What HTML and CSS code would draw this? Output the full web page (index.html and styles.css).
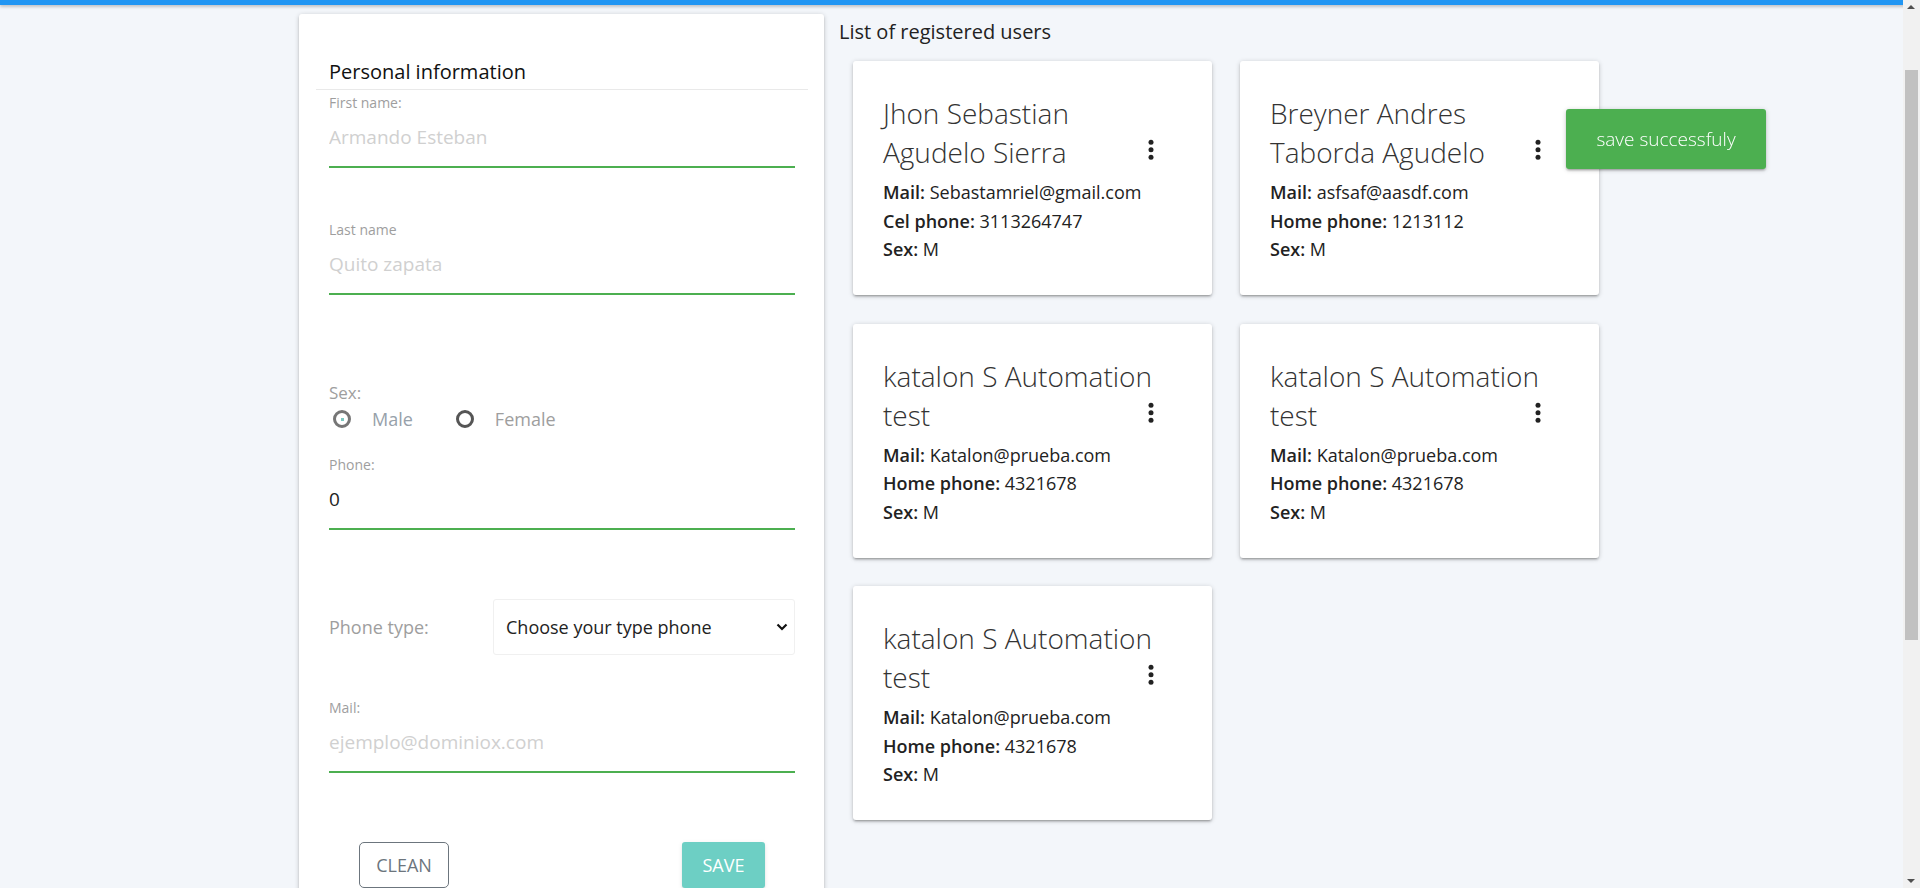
FILE: index.html
```html
<!DOCTYPE html>
<html lang="en">
<head>
<meta charset="utf-8">
<title>Users</title>
<link rel="stylesheet" href="styles.css">
</head>
<body>
<div class="topbar"></div>
<main class="page">
  <section class="form-card">
    <h2 class="form-title">Personal information</h2>
    <div class="divider"></div>
    <label class="field-label">First name:</label>
    <input class="field-input" type="text" placeholder="Armando Esteban">
    <label class="field-label gap-lg">Last name</label>
    <input class="field-input" type="text" placeholder="Quito zapata">
    <div class="sex-label">Sex:</div>
    <div class="radio-row">
      <span class="radio radio-male"><span class="radio-dot"></span></span>
      <span class="radio-text male">Male</span>
      <span class="radio radio-female"></span>
      <span class="radio-text">Female</span>
    </div>
    <label class="field-label phone-label">Phone:</label>
    <input class="field-input filled" type="text" value="0">
    <div class="type-row">
      <span class="type-label">Phone type:</span>
      <div class="select-wrap">
        <select class="type-select">
          <option>Choose your type phone</option>
        </select>
        <svg class="chevron" width="12" height="8" viewBox="0 0 12 8"><path d="M1.5 1.5 L6 6 L10.5 1.5" fill="none" stroke="#111" stroke-width="2.2"/></svg>
      </div>
    </div>
    <label class="field-label mail-label">Mail:</label>
    <input class="field-input" type="text" placeholder="ejemplo@dominiox.com">
    <div class="buttons">
      <button class="btn-clean">CLEAN</button>
      <button class="btn-save">SAVE</button>
    </div>
  </section>

  <section class="users">
    <h3 class="users-title">List of registered users</h3>
    <div class="grid">
      <article class="user-card">
        <div class="card-title"><span class="name"><span class="seg">Jhon Sebastian</span> <span class="seg">Agudelo Sierra</span></span><svg class="more" width="30" height="30" viewBox="0 0 24 24"><circle cx="12" cy="6.5" r="2"/><circle cx="12" cy="12.5" r="2"/><circle cx="12" cy="18.5" r="2"/></svg></div>
        <p class="line"><b>Mail:</b> Sebastamriel@gmail.com</p>
        <p class="line"><b>Cel phone:</b> 3113264747</p>
        <p class="line"><b>Sex:</b> M</p>
      </article>
      <article class="user-card">
        <div class="card-title"><span class="name"><span class="seg">Breyner Andres</span> <span class="seg">Taborda Agudelo</span></span><svg class="more" width="30" height="30" viewBox="0 0 24 24"><circle cx="12" cy="6.5" r="2"/><circle cx="12" cy="12.5" r="2"/><circle cx="12" cy="18.5" r="2"/></svg></div>
        <p class="line"><b>Mail:</b> asfsaf@aasdf.com</p>
        <p class="line"><b>Home phone:</b> 1213112</p>
        <p class="line"><b>Sex:</b> M</p>
      </article>
      <article class="user-card">
        <div class="card-title"><span class="name"><span class="seg">katalon S Automation</span> <span class="seg">test</span></span><svg class="more" width="30" height="30" viewBox="0 0 24 24"><circle cx="12" cy="6.5" r="2"/><circle cx="12" cy="12.5" r="2"/><circle cx="12" cy="18.5" r="2"/></svg></div>
        <p class="line"><b>Mail:</b> Katalon@prueba.com</p>
        <p class="line"><b>Home phone:</b> 4321678</p>
        <p class="line"><b>Sex:</b> M</p>
      </article>
      <article class="user-card">
        <div class="card-title"><span class="name"><span class="seg">katalon S Automation</span> <span class="seg">test</span></span><svg class="more" width="30" height="30" viewBox="0 0 24 24"><circle cx="12" cy="6.5" r="2"/><circle cx="12" cy="12.5" r="2"/><circle cx="12" cy="18.5" r="2"/></svg></div>
        <p class="line"><b>Mail:</b> Katalon@prueba.com</p>
        <p class="line"><b>Home phone:</b> 4321678</p>
        <p class="line"><b>Sex:</b> M</p>
      </article>
      <article class="user-card">
        <div class="card-title"><span class="name"><span class="seg">katalon S Automation</span> <span class="seg">test</span></span><svg class="more" width="30" height="30" viewBox="0 0 24 24"><circle cx="12" cy="6.5" r="2"/><circle cx="12" cy="12.5" r="2"/><circle cx="12" cy="18.5" r="2"/></svg></div>
        <p class="line"><b>Mail:</b> Katalon@prueba.com</p>
        <p class="line"><b>Home phone:</b> 4321678</p>
        <p class="line"><b>Sex:</b> M</p>
      </article>
    </div>
  </section>
</main>
<div class="toast">save successfuly</div>
<div class="scrollbar">
  <span class="sb-arrow sb-up"></span>
  <span class="sb-thumb"></span>
  <span class="sb-arrow sb-down"></span>
</div>
</body>
</html>
```
FILE: styles.css
```css
* { box-sizing: border-box; }
body {
  margin: 0;
  background: #f3f6fa;
  font-family: "Open Sans", "Noto Sans", sans-serif;
  color: #222;
}
.topbar {
  position: fixed;
  top: 0; left: 0; right: 0;
  height: 5px;
  background: #2196f3;
  box-shadow: 0 2px 3px rgba(0,0,0,0.2);
  z-index: 5;
}
.scrollbar {
  position: fixed;
  top: 0; right: 0; bottom: 0;
  width: 17px;
  background: #f1f1f1;
  z-index: 10;
}
.sb-thumb {
  position: absolute;
  left: 2px; right: 2px;
  top: 70px;
  height: 570px;
  background: #c1c1c1;
}
.sb-arrow {
  position: absolute;
  left: 4px;
  width: 0; height: 0;
  border-left: 4.5px solid transparent;
  border-right: 4.5px solid transparent;
}
.sb-up { top: 5px; border-bottom: 4px solid #505050; }
.sb-down { bottom: 5px; border-top: 4px solid #505050; }
.page {
  display: flex;
  align-items: flex-start;
  gap: 15px;
  padding: 14px 0 420px 299px;
}
.form-card {
  width: 525px;
  height: 960px;
  background: #fff;
  border-radius: 3px;
  box-shadow: 0 2px 2px 0 rgba(0,0,0,.14), 0 3px 1px -2px rgba(0,0,0,.12), 0 1px 5px 0 rgba(0,0,0,.2);
  padding: 44px 0 0 0;
  display: flex;
  flex-direction: column;
}
.form-title {
  margin: 0 0 3px 30px;
  font-size: 20px;
  font-weight: 400;
  line-height: 28px;
  color: #111;
}
.divider {
  height: 1px;
  background: #e9e9e9;
  margin: 0 16px 0 17px;
}
.field-label {
  display: block;
  margin: 5px 30px 0 30px;
  font-size: 14px;
  line-height: 16px;
  color: #9e9e9e;
}
.field-label.gap-lg { margin-top: 55px; }
.field-label.phone-label { margin-top: 26px; }
.field-label.mail-label { margin-top: 45px; }
.field-input {
  display: block;
  margin: 5px 29px 0 30px;
  width: 466px;
  height: 51px;
  padding: 0 0 8px 0;
  border: none;
  border-bottom: 1px solid #4caf50;
  box-shadow: 0 1px 0 0 #4caf50;
  outline: none;
  background: transparent;
  font-family: inherit;
  font-size: 19px;
  color: #222;
}
.field-input::placeholder { color: #d0d0d0; }
.sex-label {
  margin: 88px 0 0 30px;
  font-size: 17px;
  line-height: 22px;
  color: #9e9e9e;
}
.radio-row {
  display: flex;
  align-items: center;
  height: 24px;
  margin: 3px 0 0 34px;
}
.radio {
  width: 18px;
  height: 18px;
  border-radius: 50%;
  display: flex;
  align-items: center;
  justify-content: center;
}
.radio-male { border: 3px solid #767676; }
.radio-female { border: 3px solid #555; margin-left: 43px; }
.radio-dot { width: 3px; height: 3px; background: #7cc7c0; }
.radio-text {
  margin-left: 21px;
  font-size: 18px;
  color: #9e9e9e;
}
.radio-text.male { color: #97a1aa; }
.type-row {
  display: flex;
  align-items: center;
  margin: 70px 29px 0 30px;
  height: 56px;
}
.type-label {
  width: 164px;
  font-size: 18px;
  color: #9e9e9e;
}
.select-wrap {
  position: relative;
  flex: 1;
  height: 56px;
}
.type-select {
  width: 100%;
  height: 100%;
  appearance: none;
  -webkit-appearance: none;
  border: 1px solid #f0f0f0;
  border-radius: 3px;
  background: #fff;
  padding: 0 0 0 12px;
  font-family: inherit;
  font-size: 18px;
  color: #222;
  outline: none;
}
.chevron { position: absolute; right: 7px; top: 24px; }
.buttons {
  display: flex;
  justify-content: space-between;
  margin: 70px 59px 0 60px;
}
.btn-clean {
  width: 90px;
  height: 46px;
  border: 1px solid #6c757d;
  border-radius: 5px;
  background: #fff;
  color: #6c757d;
  font-family: inherit;
  font-size: 18px;
}
.btn-save {
  width: 83px;
  height: 46px;
  border: none;
  border-radius: 3px;
  background: #6dcfc4;
  color: #fff;
  font-family: inherit;
  font-size: 18px;
  box-shadow: 0 2px 2px 0 rgba(0,0,0,.08), 0 1px 5px 0 rgba(0,0,0,.08);
}
.users { display: flex; flex-direction: column; }
.users-title {
  margin: 4px 0 15px 0;
  font-size: 20px;
  font-weight: 400;
  line-height: 28px;
  color: #222;
}
.grid {
  display: grid;
  grid-template-columns: 359px 359px;
  grid-auto-rows: 234px;
  column-gap: 28px;
  row-gap: 28.5px;
  padding-left: 14px;
}
.user-card {
  background: #fff;
  border-radius: 3px;
  box-shadow: 0 2px 2px 0 rgba(0,0,0,.14), 0 3px 1px -2px rgba(0,0,0,.12), 0 1px 5px 0 rgba(0,0,0,.2);
  padding: 33px 30px 0 30px;
}
.card-title {
  display: flex;
  align-items: flex-end;
  justify-content: space-between;
  padding-right: 16px;
}
.name {
  width: 250px;
  font-size: 28px;
  font-weight: 300;
  line-height: 39px;
  color: #333;
}
.seg { white-space: nowrap; }
.more { fill: #222; margin-bottom: 8px; flex: none; }
.line {
  margin: 0;
  font-size: 18px;
  line-height: 28.5px;
  color: #222;
}
.line:first-of-type { margin-top: 6px; }
.line b { font-weight: 600; }
.toast {
  position: fixed;
  left: 1566px;
  top: 109px;
  width: 200px;
  height: 60px;
  border-radius: 3px;
  background: #4caf50;
  color: #fff;
  font-size: 19px;
  font-weight: 300;
  display: flex;
  align-items: center;
  justify-content: center;
  box-shadow: 0 2px 2px 0 rgba(0,0,0,.14), 0 3px 1px -2px rgba(0,0,0,.12), 0 1px 5px 0 rgba(0,0,0,.2);
}
```
